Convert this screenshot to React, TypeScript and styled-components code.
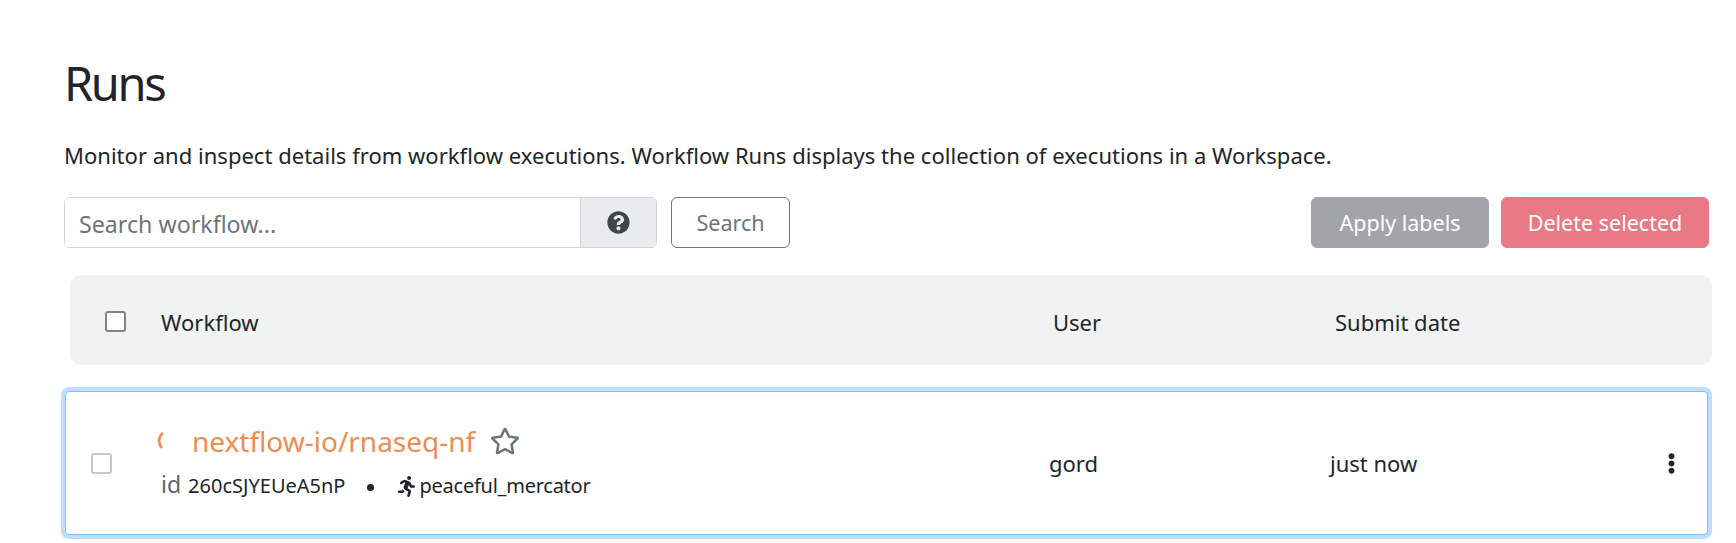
import React from "react";
import styled, { createGlobalStyle } from "styled-components";
import { FaQuestionCircle, FaRegStar, FaRunning, FaEllipsisV } from "react-icons/fa";

const Global = createGlobalStyle`
  html, body { margin: 0; padding: 0; background: #fff; }
  body { font-family: "Noto Sans", "Liberation Sans", sans-serif; color: #212529; }
  * { box-sizing: border-box; }
`;

const Page = styled.div`
  width: 1736px;
  height: 543px;
  overflow: hidden;
  padding: 54px 27px 0 64px;
`;

const Title = styled.h1`
  margin: 0;
  font-size: 47px;
  line-height: 58px;
  font-weight: 400;
  letter-spacing: -2.4px;
  color: #212529;
`;

const Lead = styled.p`
  margin: 28px 0 0;
  font-size: 22px;
  line-height: 30px;
  letter-spacing: 0.02px;
  white-space: nowrap;
`;

const Toolbar = styled.div`
  margin-top: 27px;
  display: flex;
  align-items: stretch;
  height: 51px;
`;

const InputGroup = styled.div`
  display: flex;
  width: 593px;
  border: 1px solid #ced4da;
  border-radius: 6px;
  overflow: hidden;
`;

const SearchInput = styled.input`
  flex: 1;
  min-width: 0;
  border: 0;
  outline: 0;
  padding: 3px 14px 0;
  font: inherit;
  font-size: 23.2px;
  color: #495057;
  &::placeholder { color: #6c757d; opacity: 1; }
`;

const Addon = styled.div`
  width: 76px;
  display: flex;
  align-items: center;
  justify-content: center;
  background: #e9ecef;
  border-left: 1px solid #ced4da;
  color: #3f454b;
  font-size: 23px;
`;

const Button = styled.button<{ $bg?: string; $w: number; $ml: string }>`
  width: ${(p) => p.$w}px;
  margin-left: ${(p) => p.$ml};
  border-radius: 6px;
  border: 1px solid ${(p) => p.$bg ?? "#6c757d"};
  background: ${(p) => p.$bg ?? "#fff"};
  color: ${(p) => (p.$bg ? "#fff" : "#6c757d")};
  font: inherit;
  font-size: 21.5px;
  padding: 0;
`;

const HeaderRow = styled.div`
  margin: 27px -3px 0 6px;
  height: 90px;
  background: #f1f3f3;
  border-radius: 11px;
  display: grid;
  grid-template-columns: 56px 892px 282px 1fr;
  align-items: center;
  font-size: 22px;
  padding: 3px 0 0 35px;
`;

const Check = styled.span<{ $light?: boolean }>`
  display: block;
  width: 21px;
  height: 21px;
  background: #fff;
  border-radius: 3px;
  border: 2px solid ${(p) => (p.$light ? "#c6c8cc" : "#7f838c")};
`;

const RunRow = styled.div`
  margin: 26px 0 0 1px;
  height: 144px;
  width: 1643px;
  background: #fff;
  border: 1px solid #80bdff;
  border-radius: 4px;
  box-shadow: 0 0 0 4px #bfdeff;
  display: grid;
  grid-template-columns: 65px 893px 281px 1fr 46px;
  align-items: center;
  font-size: 22px;
  padding-left: 25px;
`;

const NameCell = styled.div`
  display: flex;
  flex-direction: column;
  gap: 10px;
  padding-bottom: 6px;
`;

const NameLine = styled.div`
  display: flex;
  align-items: center;
  height: 42px;
`;

const Spinner = styled.svg`
  width: 10px;
  height: 20px;
  flex: none;
  margin-right: 26px;
`;

const RunName = styled.span`
  font-size: 28px;
  color: #ec8d52;
`;

const StarIcon = styled(FaRegStar)`
  margin-left: 15px;
  font-size: 30px;
  color: #6c757d;
`;

const MetaLine = styled.div`
  display: flex;
  align-items: center;
  font-size: 20px;
  line-height: 28px;
`;

const IdLabel = styled.span`
  color: #5f666d;
  font-size: 23px;
  margin: -4px 7px 0 5px;
`;

const Dot = styled.span`
  width: 7px;
  height: 7px;
  border-radius: 50%;
  background: #212529;
  margin: 3px 22px 0 22px;
`;

const RunnerIcon = styled(FaRunning)`
  font-size: 21px;
  margin-right: 2px;
  color: #212529;
`;

const RunLabel = styled.span`
  letter-spacing: -0.25px;
`;

const Kebab = styled(FaEllipsisV)`
  font-size: 21px;
  color: #212529;
`;

export default function App() {
  return (
    <Page>
      <Global />
      <Title>Runs</Title>
      <Lead>Monitor and inspect details from workflow executions. Workflow Runs displays the collection of executions in a Workspace.</Lead>
      <Toolbar>
        <InputGroup>
          <SearchInput placeholder="Search workflow..." />
          <Addon><FaQuestionCircle /></Addon>
        </InputGroup>
        <Button $w={119} $ml="14px">Search</Button>
        <Button $bg="#a1a5a9" $w={178} $ml="auto">Apply labels</Button>
        <Button $bg="#e97a85" $w={208} $ml="12px">Delete selected</Button>
      </Toolbar>
      <HeaderRow>
        <Check />
        <span>Workflow</span>
        <span>User</span>
        <span>Submit date</span>
      </HeaderRow>
      <RunRow>
        <Check $light />
        <NameCell>
          <NameLine>
            <Spinner viewBox="0 0 10 20">
              <path d="M7 2 C2 6 2 13 6 17" fill="none" stroke="#ec8d52" strokeWidth="2.6" />
            </Spinner>
            <RunName>nextflow-io/rnaseq-nf</RunName>
            <StarIcon />
          </NameLine>
          <MetaLine>
            <IdLabel>id</IdLabel>
            <span>260cSJYEUeA5nP</span>
            <Dot />
            <RunnerIcon />
            <RunLabel>peaceful_mercator</RunLabel>
          </MetaLine>
        </NameCell>
        <span>gord</span>
        <span>just now</span>
        <Kebab />
      </RunRow>
    </Page>
  );
}
